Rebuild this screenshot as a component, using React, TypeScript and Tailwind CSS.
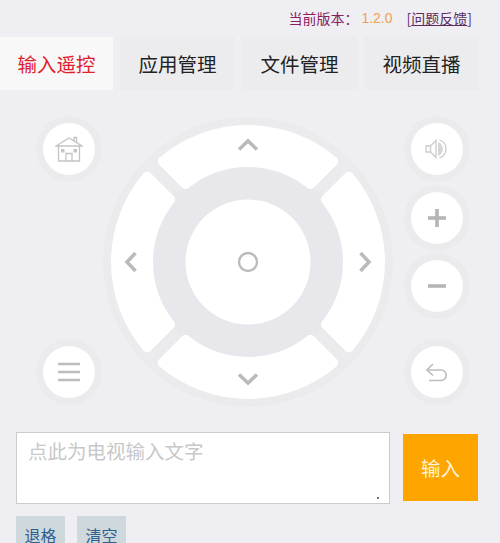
import type { ReactNode } from 'react';

const tabs = [
    { label: '输入遥控', width: 'w-[113px]' },
    { label: '应用管理', width: 'w-[115px]' },
    { label: '文件管理', width: 'w-[115px]' },
    { label: '视频直播', width: 'w-[115px]' },
];

function Knob({ children, className = '' }: { children: ReactNode; className?: string }) {
    return (
        <div className={`flex h-[66px] w-[66px] items-center justify-center rounded-full bg-[#ebebee] ${className}`}>
            <div className="flex h-[52px] w-[52px] items-center justify-center rounded-full bg-white">
                {children}
            </div>
        </div>
    );
}

function HomeIcon() {
    return (
        <svg width="28" height="26" viewBox="0 0 28 26" fill="none" stroke="#c4c4c4" strokeWidth="1.3">
            <path d="M1 10 L14 2 L27 10 Z" />
            <path d="M19 5 V1.5 H21.5 V7" />
            <path d="M3.5 10 V25 H24.5 V10" />
            <path d="M11 25 V17.5 H17 V25" />
            <rect x="6" y="13" width="3.5" height="3.5" fill="#c4c4c4" stroke="none" />
            <rect x="18.5" y="13" width="3.5" height="3.5" fill="#c4c4c4" stroke="none" />
        </svg>
    );
}

function VolumeIcon() {
    return (
        <svg width="24" height="20" viewBox="0 0 24 20" fill="none" stroke="#cccccc" strokeWidth="1.3">
            <path d="M1 7 H5.5 V13 H1 Z" />
            <path d="M5.5 7 L11 1.5 V18.5 L5.5 13" />
            <path d="M13 3 A7.5 7.5 0 0 1 13 17 Z" fill="#d6d6d6" stroke="none" />
            <path d="M14.5 1 A9.5 9.5 0 0 1 14.5 19" />
        </svg>
    );
}

function BarIcon({ plus }: { plus?: boolean }) {
    return (
        <svg width="18" height="18" viewBox="0 0 18 18" stroke="#b5b5b5" strokeWidth="3.6">
            <path d="M0 9 H18" />
            {plus && <path d="M9 0 V18" />}
        </svg>
    );
}

function MenuIcon() {
    return (
        <svg width="22" height="20" viewBox="0 0 22 20" stroke="#bdbdbd" strokeWidth="2.4">
            <path d="M0 2 H22 M0 10 H22 M0 18 H22" />
        </svg>
    );
}

function BackIcon() {
    return (
        <svg width="22" height="19" viewBox="0 0 22 19" fill="none" stroke="#bdbdbd" strokeWidth="1.6">
            <path d="M7 1 L1 7 L7 12.5" />
            <path d="M1 7 H15 A5.2 5.2 0 0 1 15 17.5 H3" />
        </svg>
    );
}

function Dpad() {
    return (
        <svg width="290" height="290" viewBox="0 0 290 290" className="ml-[1px] shrink-0">
            <circle cx="145" cy="145" r="145" fill="#ebebee" />
            <circle cx="145" cy="145" r="100" fill="#e8e8ec" />
            {[0, 90, 180, 270].map(angle => (
                <g key={angle} transform={`rotate(${angle} 145 145)`}>
                    <path
                        d="M59.8 44.2 A132 132 0 0 1 230.2 44.2 L207.5 67 A100 100 0 0 0 82.5 67 Z"
                        fill="#fff"
                        stroke="#fff"
                        strokeWidth="10"
                        strokeLinejoin="round"
                    />
                    <path d="M136 32.5 L145 24 L154 32.5" fill="none" stroke="#bbbbbb" strokeWidth="3.6" />
                </g>
            ))}
            <circle cx="145" cy="145" r="62.5" fill="#fff" />
            <circle cx="145" cy="145" r="9" fill="none" stroke="#bbbbbb" strokeWidth="2.4" />
        </svg>
    );
}

export default function App() {
    return (
        <div className="h-screen overflow-hidden bg-[#efeff3] font-['Noto_Sans_CJK_SC',sans-serif]">
            <div className="flex h-[37px] items-start justify-end pr-[28px] pt-[8px] text-[14px] leading-[20px] text-[#8a2060]">
                <span>当前版本：</span>
                <span className="ml-[3px] text-[14px] text-[#f0a050] font-['Liberation_Sans',sans-serif]">1.2.0</span>
                <span className="ml-[14px] text-[#5a2a60]">
                    [<span className="underline">问题反馈</span>]
                </span>
            </div>

            <div className="flex gap-[7px]">
                {tabs.map((tab, i) => (
                    <div
                        key={tab.label}
                        className={`flex h-[53px] items-center justify-center text-[19.5px] ${tab.width} ${
                            i === 0 ? 'bg-[#f8f8f9] text-[#e0202c]' : 'bg-[#ececee] text-[#222]'
                        }`}
                    >
                        {tab.label}
                    </div>
                ))}
            </div>

            <div className="mt-[27px] flex pl-[36px]">
                <div className="-mt-px flex h-[289px] w-[66px] shrink-0 flex-col justify-between">
                    <Knob><HomeIcon /></Knob>
                    <Knob><MenuIcon /></Knob>
                </div>
                <Dpad />
                <div className="-mt-px ml-[11px] flex h-[289px] w-[66px] shrink-0 flex-col">
                    <Knob><VolumeIcon /></Knob>
                    <Knob className="mt-[3px]"><BarIcon plus /></Knob>
                    <Knob className="mt-[2px]"><BarIcon /></Knob>
                    <Knob className="mt-auto"><BackIcon /></Knob>
                </div>
            </div>

            <div className="mt-[25px] flex items-start pl-[16px]">
                <div className="relative h-[72px] w-[374px]">
                    <textarea
                        placeholder="点此为电视输入文字"
                        className="block h-full w-full resize-none border border-[#cccccc] bg-white px-[11px] py-[4px] text-[19.5px] leading-[28px] outline-none placeholder:text-[#c8c8c8]"
                    />
                    <span className="absolute bottom-[5px] right-[11px] h-[2px] w-[2px] bg-[#777]" />
                </div>
                <div className="ml-[13px] mt-[2px] flex h-[67px] w-[75px] items-center justify-center bg-[#ffa500] text-[19.5px] text-[#fdf3dc]">
                    输入
                </div>
            </div>

            <div className="mt-[12px] flex gap-[12px] pl-[16px]">
                <div className="flex h-[38px] w-[49px] items-center justify-center bg-[#cfd8dc] text-[16px] text-[#2f5f8f]">退格</div>
                <div className="flex h-[38px] w-[49px] items-center justify-center bg-[#cfd8dc] text-[16px] text-[#2f5f8f]">清空</div>
            </div>
        </div>
    );
}
